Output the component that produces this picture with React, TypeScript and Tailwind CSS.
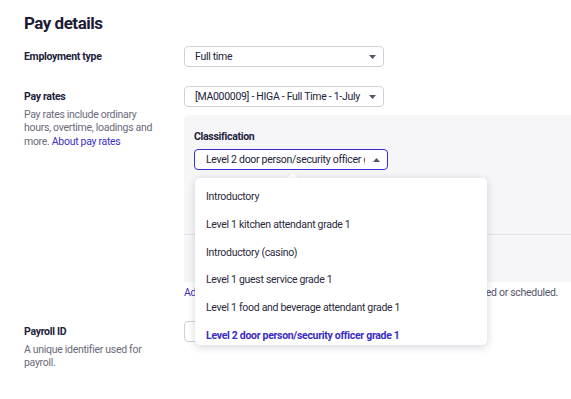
import React from 'react';

const options = [
  'Introductory',
  'Level 1 kitchen attendant grade 1',
  'Introductory (casino)',
  'Level 1 guest service grade 1',
  'Level 1 food and beverage attendant grade 1',
  'Level 2 door person/security officer grade 1',
];

function Caret({ up }: { up?: boolean }) {
  return (
    <svg width="7" height="4" viewBox="0 0 7 4" className="shrink-0">
      {up ? <path d="M0 4 L3.5 0 L7 4 Z" fill="#55556a" /> : <path d="M0 0 L7 0 L3.5 4 Z" fill="#55556a" />}
    </svg>
  );
}

function Select({ value }: { value: string }) {
  return (
    <div className="h-[21px] w-[200px] rounded-[4px] border border-[#cfcfd8] bg-white flex items-center pl-[10px] pr-[7px] gap-2">
      <span className="flex-1 overflow-hidden whitespace-nowrap text-[10.5px] text-[#22223a]">{value}</span>
      <Caret />
    </div>
  );
}

export default function App() {
  return (
    <div className="w-[571px] h-[399px] overflow-hidden bg-white relative font-['Roboto',sans-serif] tracking-[-0.3px] text-[#22223a]">
      <div className="pl-6 pt-[11px]">
        <h1 className="text-[17px] leading-6 font-bold tracking-[-0.5px] text-[#1c1b36]">Pay details</h1>

        {/* Employment type */}
        <div className="flex mt-[11px]">
          <div className="w-40 h-[21px] flex items-center text-[10.5px] font-bold">Employment type</div>
          <Select value="Full time" />
        </div>

        {/* Pay rates */}
        <div className="flex mt-[19px]">
          <div className="w-40 shrink-0">
            <div className="h-[21px] flex items-center text-[10.5px] font-bold">Pay rates</div>
            <p className="w-[134px] text-[10.5px] leading-[13.5px] text-[#6a6a7a] mt-[0.5px]">
              Pay rates include ordinary hours, overtime, loadings and more.{' '}
              <span className="text-[#3d2fc6]">About pay rates</span>
            </p>
          </div>
          <div className="flex-1 min-w-0">
            <Select value="[MA000009] - HIGA - Full Time - 1-July 2024" />
            <div className="mt-2 w-[420px] h-[167px] rounded-tl-[6px] bg-[#f6f6f9] pl-[10px] pt-[15px]">
              <div className="text-[10.5px] leading-[14px] font-bold">Classification</div>
              <div className="relative mt-[5px] w-[194px]">
                <div className="h-[21px] rounded-[4px] border border-[#3b2fc9] bg-white flex items-center pl-[11px] pr-[7px] gap-2">
                  <span className="flex-1 overflow-hidden whitespace-nowrap text-[10.5px] text-[#22223a]">
                    Level 2 door person/security officer grade 1
                  </span>
                  <Caret up />
                </div>

                {/* dropdown menu */}
                <div className="absolute left-[1px] top-[29px] w-[292px] z-10">
                  <div className="absolute left-[93px] -top-[4px] w-[9px] h-[9px] rotate-45 bg-white shadow-[0_0_3px_rgba(0,0,0,0.08)]" />
                  <div className="relative h-[167px] overflow-hidden rounded-[5px] bg-white shadow-[0_2px_8px_rgba(30,30,60,0.18)] pt-[5px]">
                    {options.map((o, i) => (
                      <div
                        key={o}
                        className={`h-[27.8px] flex items-center px-[11px] text-[10.5px] whitespace-nowrap ${
                          i === options.length - 1 ? 'font-bold text-[#3a2cc4]' : 'text-[#2a2a3e]'
                        }`}
                      >
                        {o}
                      </div>
                    ))}
                  </div>
                </div>
              </div>
              <div className="mt-[64px] -ml-[10px] border-t border-[#e2e2e8]" />
            </div>
            <div className="flex justify-between w-[374px] mt-[4px] text-[10.5px] leading-[14px]">
              <span className="text-[#3d2fc6]">Add pay rate</span>
              <span className="text-[#55556a]">Changes apply to pay runs not yet processed or scheduled.</span>
            </div>
          </div>
        </div>

        {/* Payroll ID */}
        <div className="flex mt-[21px]">
          <div className="w-40 shrink-0">
            <div className="h-[21px] flex items-center text-[10.5px] font-bold">Payroll ID</div>
            <p className="w-[134px] text-[10.5px] leading-[13.5px] text-[#6a6a7a] mt-[0.5px]">
              A unique identifier used for payroll.
            </p>
          </div>
          <div className="h-[21px] w-[200px] rounded-[4px] border border-[#cfcfd8] bg-white" />
        </div>
      </div>
    </div>
  );
}
